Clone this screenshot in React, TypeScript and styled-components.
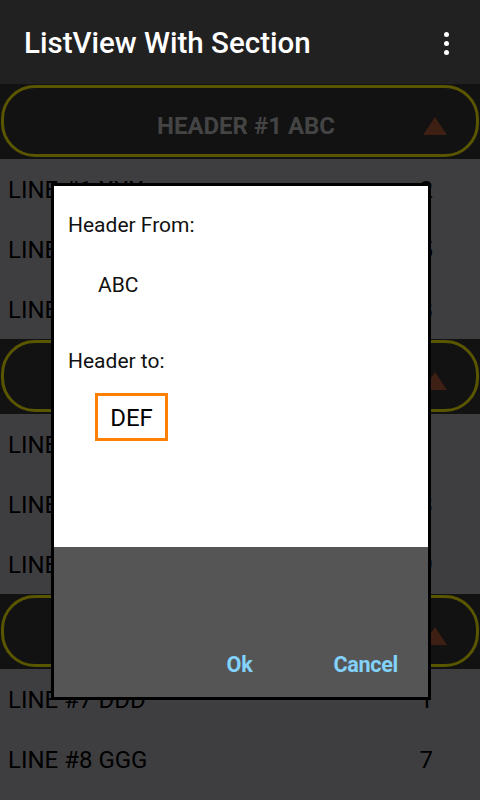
import React from "react";
import styled, { createGlobalStyle } from "styled-components";

const Global = createGlobalStyle`
  html, body { margin: 0; padding: 0; }
  body { background: #3e3e40; font-family: Roboto, "Noto Sans", sans-serif; overflow: hidden; }
`;

const Screen = styled.div`
  position: relative;
  width: 480px;
  height: 800px;
  overflow: hidden;
  background: #3e3e40;
  display: flex;
  flex-direction: column;
`;

const AppBar = styled.header`
  height: 84px;
  flex: none;
  background: #212121;
  display: flex;
  align-items: center;
  justify-content: space-between;
  padding: 0 31px 0 24px;
`;

const Title = styled.h1`
  margin: 0;
  font-family: Roboto, sans-serif;
  font-weight: 500;
  font-size: 29.5px;
  color: #ffffff;
  padding-top: 2px;
`;

const Dots = styled.div`
  display: flex;
  flex-direction: column;
  gap: 4px;
  padding-top: 2px;
  span {
    width: 5px;
    height: 5px;
    border-radius: 50%;
    background: #fff;
  }
`;

const HeaderStrip = styled.div`
  height: 75px;
  flex: none;
  background: #121212;
  padding: 1px 0 2px 0;
  box-sizing: border-box;
  display: flex;
`;

const Pill = styled.div`
  flex: 1;
  margin: 0 1px;
  border: 3px solid #5a5600;
  border-radius: 34px;
  display: grid;
  grid-template-columns: 1fr auto 1fr;
  align-items: center;
  padding-top: 9px;
`;

const HeaderText = styled.span`
  grid-column: 2;
  font-family: Roboto, sans-serif;
  font-weight: 700;
  font-size: 24px;
  color: #444444;
  padding-left: 12px;
`;

const Triangle = styled.span`
  grid-column: 3;
  justify-self: end;
  margin-right: 29px;
  width: 0;
  height: 0;
  border-left: 12px solid transparent;
  border-right: 12px solid transparent;
  border-bottom: 18px solid #3d1f14;
`;

const Row = styled.div`
  height: 60px;
  flex: none;
  display: flex;
  align-items: center;
  justify-content: space-between;
  padding: 2px 47px 0 8px;
  box-sizing: border-box;
  font-family: Roboto, sans-serif;
  font-size: 24px;
  color: #000;
`;

const Overlay = styled.div`
  position: absolute;
  left: 51px;
  top: 183px;
  width: 380px;
  height: 517px;
  box-sizing: border-box;
  border: 3px solid #000;
  display: flex;
  flex-direction: column;
`;

const Body = styled.div`
  background: #fff;
  height: 361px;
  flex: none;
  padding: 0 14px;
  display: flex;
  flex-direction: column;
  align-items: flex-start;
  font-family: Roboto, sans-serif;
  color: #111;
`;

const Label = styled.div<{ $top: number }>`
  margin-top: ${(p) => p.$top}px;
  font-size: 21px;
  line-height: 24px;
`;

const Value = styled.div<{ $top: number }>`
  margin-top: ${(p) => p.$top}px;
  margin-left: 30px;
  font-size: 21px;
  line-height: 26px;
`;

const Field = styled.div`
  margin-top: 20px;
  margin-left: 27px;
  width: 73px;
  height: 48px;
  box-sizing: border-box;
  border: 3px solid #ff8000;
  display: flex;
  align-items: center;
  justify-content: center;
  font-size: 24px;
  color: #000;
  padding-top: 1px;
`;

const Footer = styled.div`
  flex: 1;
  background: #555555;
  display: flex;
  justify-content: flex-end;
  align-items: flex-end;
  gap: 81px;
  padding: 0 30px 20px 0;
`;

const Action = styled.button`
  background: none;
  border: none;
  padding: 0;
  font-family: Roboto, sans-serif;
  font-weight: 700;
  font-size: 21.6px;
  color: #82d2fb;
  letter-spacing: -0.3px;
`;

type Item = { kind: "h"; text: string } | { kind: "r"; text: string; n: string };

const items: Item[] = [
  { kind: "h", text: "HEADER #1 ABC" },
  { kind: "r", text: "LINE #1 XXX", n: "2" },
  { kind: "r", text: "LINE #2 YYY", n: "5" },
  { kind: "r", text: "LINE #3 ZZZ", n: "8" },
  { kind: "h", text: "HEADER #2 DEF" },
  { kind: "r", text: "LINE #4 AAA", n: "1" },
  { kind: "r", text: "LINE #5 BBB", n: "3" },
  { kind: "r", text: "LINE #6 CCC", n: "9" },
  { kind: "h", text: "HEADER #3 GHI" },
  { kind: "r", text: "LINE #7 DDD", n: "1" },
  { kind: "r", text: "LINE #8 GGG", n: "7" },
];

export default function App() {
  return (
    <>
      <Global />
      <Screen>
        <AppBar>
          <Title>ListView With Section</Title>
          <Dots>
            <span />
            <span />
            <span />
          </Dots>
        </AppBar>
        {items.map((it, i) =>
          it.kind === "h" ? (
            <HeaderStrip key={i}>
              <Pill>
                <HeaderText>{it.text}</HeaderText>
                <Triangle />
              </Pill>
            </HeaderStrip>
          ) : (
            <Row key={i}>
              <span>{it.text}</span>
              <span>{it.n}</span>
            </Row>
          )
        )}
        <Overlay>
          <Body>
            <Label $top={27}>Header From:</Label>
            <Value $top={35}>ABC</Value>
            <Label $top={51}>Header to:</Label>
            <Field>DEF</Field>
          </Body>
          <Footer>
            <Action>Ok</Action>
            <Action>Cancel</Action>
          </Footer>
        </Overlay>
      </Screen>
    </>
  );
}
